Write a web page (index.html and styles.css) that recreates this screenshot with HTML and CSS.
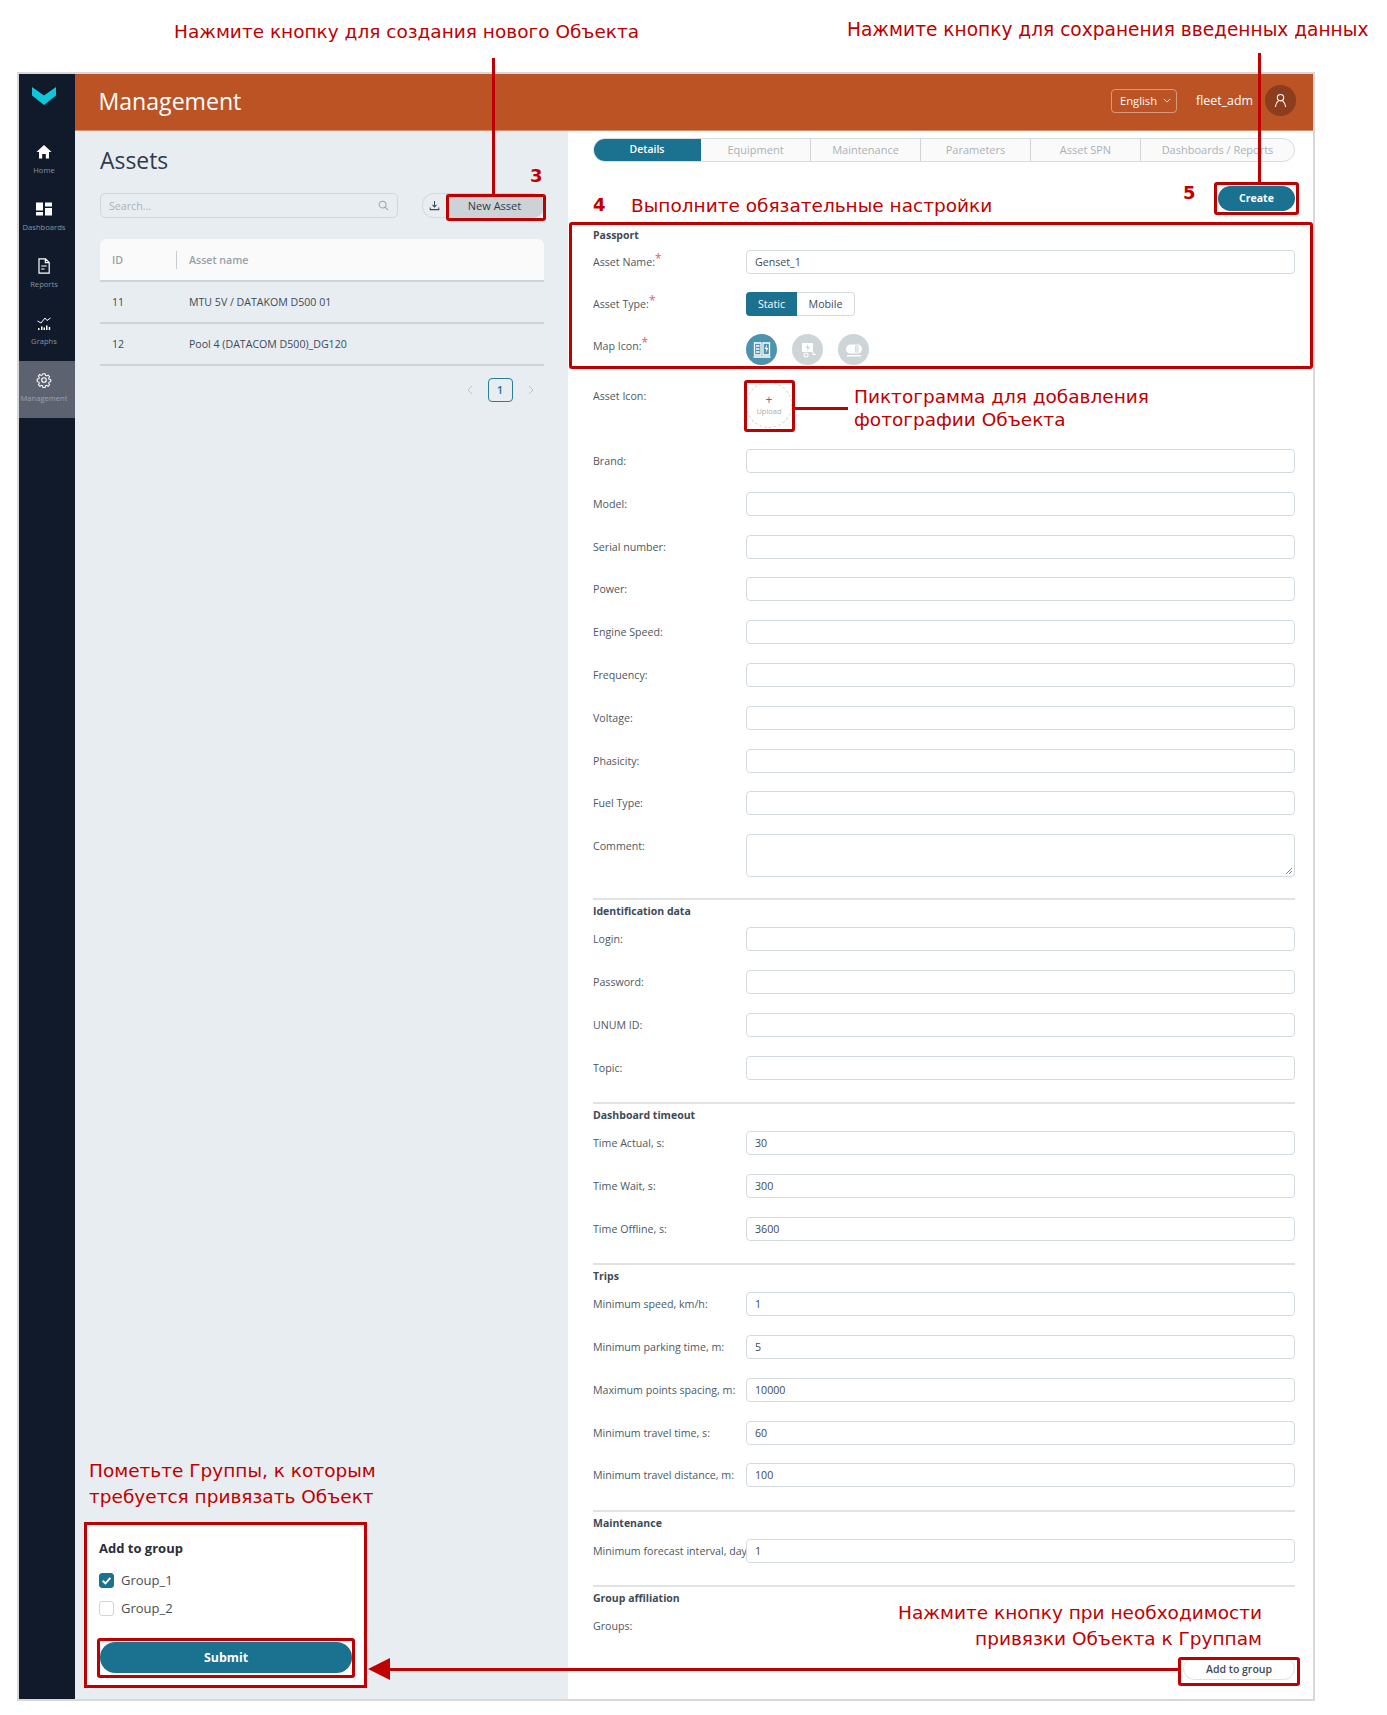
FILE: index.html
```html
<!DOCTYPE html>
<html lang="en">
<head>
<meta charset="utf-8">
<title>Management</title>
<link rel="stylesheet" href="styles.css">
</head>
<body>
<div class="app">
  <nav class="sidebar">
    <svg class="logo" viewBox="0 0 24 18"><path d="M0 0 L12 8.5 L24 0 L24 8.5 L12 18 L0 8.5 Z" fill="#10c6da"/></svg>
    <a class="nav-item nav-first">
      <svg class="nav-ico" viewBox="0 0 16 16"><path d="M8 1 L15.5 8 L13 8 L13 14.5 L9.8 14.5 L9.8 10 L6.2 10 L6.2 14.5 L3 14.5 L3 8 L.5 8 Z" fill="#fff"/></svg>
      <span>Home</span>
    </a>
    <a class="nav-item">
      <svg class="nav-ico" viewBox="0 0 16 16"><path d="M0 1.5h7v8H0zM9 1.5h7v4H9zM0 11h7v3.5H0zM9 7h7v7.5H9z" fill="#fff"/></svg>
      <span>Dashboards</span>
    </a>
    <a class="nav-item">
      <svg class="nav-ico" viewBox="0 0 16 16"><path d="M3 .8h6.5L13.2 4.5v10.7H3zM9.3 1v3.6h3.7M5.2 8h5.6M5.2 11h3.4" fill="none" stroke="#fff" stroke-width="1.2"/></svg>
      <span>Reports</span>
    </a>
    <a class="nav-item">
      <svg class="nav-ico" viewBox="0 0 16 16"><path d="M1.5 6 L5 8 L9 3 L11 5.5 L14.5 3" fill="none" stroke="#fff" stroke-width="1"/><path d="M2 13h1.5v2H2zM5 11.5h1.5V15H5zM7.5 12.5H9V15H7.5zM10 10.5h1.5V15H10zM12.7 12h1.5v3h-1.5z" fill="#fff"/></svg>
      <span>Graphs</span>
    </a>
    <a class="nav-item nav-active">
      <svg class="nav-ico" viewBox="0 0 16 16"><path d="M6.7 1h2.6l.4 2 1.3.6 1.8-1 1.8 1.9-1.1 1.7.5 1.3 2 .4v2.4l-2 .5-.5 1.3 1.1 1.7-1.8 1.9-1.8-1.1-1.3.6-.4 2H6.7l-.4-2-1.3-.6-1.8 1.1-1.8-1.9 1.1-1.7-.5-1.3-2-.5V7.2l2-.4.5-1.3-1.1-1.7L2.9 1.9l1.8 1 1.3-.6z" transform="translate(1.2 .9) scale(.85)" fill="none" stroke="#fff" stroke-width="1.2"/><circle cx="8" cy="8" r="2.3" fill="none" stroke="#fff" stroke-width="1.1"/></svg>
      <span>Management</span>
    </a>
  </nav>
  <div class="main">
    <header class="topbar">
      <h1 class="page-title">Management</h1>
      <div class="top-right">
        <div class="lang">English
          <svg class="lang-caret" viewBox="0 0 10 6"><path d="M1 1 L5 5 L9 1" fill="none" stroke="#fff" stroke-width="1"/></svg>
        </div>
        <span class="user">fleet_adm</span>
        <div class="avatar">
          <svg viewBox="0 0 16 16" class="avatar-ico"><circle cx="8" cy="5" r="3.4" fill="none" stroke="#fff" stroke-width="1.2"/><path d="M2.5 15 C3 10.5 5 9 5.8 8.2 M13.5 15 C13 10.5 11 9 10.2 8.2" fill="none" stroke="#fff" stroke-width="1.2"/></svg>
        </div>
      </div>
    </header>
    <div class="panels">
      <section class="left">
        <h2 class="assets-title">Assets</h2>
        <div class="toolbar">
          <div class="search">
            <span>Search...</span>
            <svg class="search-ico" viewBox="0 0 12 12"><circle cx="5" cy="5" r="3.7" fill="none" stroke="#9aa3ab" stroke-width="1.1"/><path d="M7.8 7.8 L11 11" stroke="#9aa3ab" stroke-width="1.1"/></svg>
          </div>
          <div class="btn-group">
            <div class="btn-down">
              <svg viewBox="0 0 12 12" class="down-ico"><path d="M6 1v6.5M3.8 5.4 L6 7.6 L8.2 5.4M1.3 8.3v2.2h9.4V8.3" fill="none" stroke="#3d4a57" stroke-width="1.1"/></svg>
            </div>
            <div class="btn-new">New Asset</div>
          </div>
        </div>
        <div class="table">
          <div class="t-head"><div class="c-id"><span>ID</span></div><div class="c-name">Asset name</div></div>
          <div class="t-row"><div class="c-id">11</div><div class="c-name">MTU 5V / DATAKOM D500 01</div></div>
          <div class="t-row"><div class="c-id">12</div><div class="c-name">Pool 4 (DATACOM D500)_DG120</div></div>
        </div>
        <div class="pager">
          <svg class="pg-arrow" viewBox="0 0 6 10"><path d="M5 1 L1 5 L5 9" fill="none" stroke="#b9c1c8" stroke-width="1"/></svg>
          <div class="pg-num">1</div>
          <svg class="pg-arrow" viewBox="0 0 6 10"><path d="M1 1 L5 5 L1 9" fill="none" stroke="#b9c1c8" stroke-width="1"/></svg>
        </div>
        <div class="group-card">
          <div class="group-title">Add to group</div>
          <label class="check-row"><span class="check checked"><svg viewBox="0 0 12 12"><path d="M2.5 6.2 L5 8.7 L9.6 3.6" fill="none" stroke="#fff" stroke-width="1.8"/></svg></span>Group_1</label>
          <label class="check-row"><span class="check"></span>Group_2</label>
          <div class="submit">Submit</div>
        </div>
      </section>
      <section class="right">
        <div class="tabs">
          <div class="tab tab-on">Details</div>
          <div class="tab">Equipment</div>
          <div class="tab">Maintenance</div>
          <div class="tab">Parameters</div>
          <div class="tab">Asset SPN</div>
          <div class="tab tab-last">Dashboards / Reports</div>
        </div>
        <div class="create-row"><div class="create">Create</div></div>
        <h3 class="sec-title sec-first">Passport</h3>
        <div class="row row-top"><label>Asset Name:<i>*</i></label><div class="field">Genset_1</div></div>
        <div class="row row-top"><label>Asset Type:<i>*</i></label>
          <div class="toggle"><span class="tg tg-on">Static</span><span class="tg">Mobile</span></div></div>
        <div class="row row-icons"><label>Map Icon:<i>*</i></label>
          <div class="map-icons">
            <span class="mi mi-on"><svg viewBox="0 0 20 20"><path d="M2.5 3h6.5v12H2.5zM11 3h6.5v12H11z" fill="none" stroke="#fff" stroke-width="1.3"/><path d="M4 6h3.5M4 9h3.5M4 12h3.5M1.5 17h17" stroke="#fff" stroke-width="1.4"/><path d="M15 4.5 L12.6 9 H14.4 L13.6 13 L16.4 8 H14.6 Z" fill="#fff"/></svg></span>
            <span class="mi"><svg viewBox="0 0 20 20"><path d="M4 3h11v9H4z" fill="#fff"/><path d="M10 4 L7.8 8 H9.6 L9 11 L12 7 H10.3 Z" fill="#cdd5d9"/><circle cx="8" cy="15" r="2" fill="none" stroke="#fff" stroke-width="1.2"/><path d="M15 12 V14.5 H18" fill="none" stroke="#fff" stroke-width="1.2"/></svg></span>
            <span class="mi"><svg viewBox="0 0 20 20"><rect x="2" y="4.5" width="16" height="9" rx="4.5" fill="#fff"/><path d="M11 5.5h3.4v7H11z" fill="#cdd5d9"/><path d="M11.6 7h2.2M11.6 9h2.2M11.6 11h2.2" stroke="#fff" stroke-width=".9"/><path d="M3 15.8h14" stroke="#fff" stroke-width="1.4"/></svg></span>
          </div></div>
        <div class="row row-upload"><label>Asset Icon:</label>
          <div class="upload"><span class="up-plus">+</span><span class="up-text">Upload</span></div></div>
        <div class="row"><label>Brand:</label><div class="field"></div></div>
        <div class="row"><label>Model:</label><div class="field"></div></div>
        <div class="row"><label>Serial number:</label><div class="field"></div></div>
        <div class="row"><label>Power:</label><div class="field"></div></div>
        <div class="row"><label>Engine Speed:</label><div class="field"></div></div>
        <div class="row"><label>Frequency:</label><div class="field"></div></div>
        <div class="row"><label>Voltage:</label><div class="field"></div></div>
        <div class="row"><label>Phasicity:</label><div class="field"></div></div>
        <div class="row"><label>Fuel Type:</label><div class="field"></div></div>
        <div class="row row-area"><label>Comment:</label><div class="field area">
          <svg class="grip" viewBox="0 0 8 8"><path d="M1 7 L7 1 M4 7 L7 4" stroke="#666" stroke-width=".8"/></svg></div></div>

        <div class="divider"></div>
        <h3 class="sec-title">Identification data</h3>
        <div class="row"><label>Login:</label><div class="field"></div></div>
        <div class="row"><label>Password:</label><div class="field"></div></div>
        <div class="row"><label>UNUM ID:</label><div class="field"></div></div>
        <div class="row"><label>Topic:</label><div class="field"></div></div>

        <div class="divider"></div>
        <h3 class="sec-title">Dashboard timeout</h3>
        <div class="row"><label>Time Actual, s:</label><div class="field">30</div></div>
        <div class="row"><label>Time Wait, s:</label><div class="field">300</div></div>
        <div class="row"><label>Time Offline, s:</label><div class="field">3600</div></div>

        <div class="divider"></div>
        <h3 class="sec-title">Trips</h3>
        <div class="row"><label>Minimum speed, km/h:</label><div class="field">1</div></div>
        <div class="row"><label>Minimum parking time, m:</label><div class="field">5</div></div>
        <div class="row"><label>Maximum points spacing, m:</label><div class="field">10000</div></div>
        <div class="row"><label>Minimum travel time, s:</label><div class="field">60</div></div>
        <div class="row"><label>Minimum travel distance, m:</label><div class="field">100</div></div>

        <div class="divider"></div>
        <h3 class="sec-title">Maintenance</h3>
        <div class="row"><label class="clip">Minimum forecast interval, days:</label><div class="field">1</div></div>

        <div class="divider"></div>
        <h3 class="sec-title">Group affiliation</h3>
        <div class="row row-groups"><label>Groups:</label></div>
        <div class="add-row"><div class="add-btn">Add to group</div></div>
      </section>
    </div>
  </div>
</div>

<div class="notes">
  <p class="note n-new">Нажмите кнопку для создания нового Объекта</p>
  <p class="note n-save">Нажмите кнопку для сохранения введенных данных</p>
  <p class="note n-req">Выполните обязательные настройки</p>
  <p class="note n-photo">Пиктограмма для добавления<br>фотографии Объекта</p>
  <p class="note n-mark">Пометьте Группы, к которым<br>требуется привязать Объект</p>
  <p class="note n-add">Нажмите кнопку при необходимости<br>привязки Объекта к Группам</p>
  <b class="num n3">3</b><b class="num n4">4</b><b class="num n5">5</b>
  <div class="box b-new"></div>
  <div class="box b-create"></div>
  <div class="box b-pass"></div>
  <div class="box b-upload"></div>
  <div class="box b-card"></div>
  <div class="box b-submit"></div>
  <div class="box b-add"></div>
  <div class="ln l-new"></div>
  <div class="ln l-save"></div>
  <div class="ln l-up"></div>
  <div class="ln l-arrow"></div>
  <div class="arrowhead"></div>
</div>
</body>
</html>
```
FILE: styles.css
```css
* { box-sizing: border-box; }
html, body { margin: 0; padding: 0; background: #fff; }
body { position: relative; width: 1387px; height: 1715px; overflow: hidden; font-family: "Open Sans", sans-serif; color: #3d4a57; }
.app { margin: 72px 0 0 17px; width: 1298px; height: 1629px; border: 2px solid #d8d8d8; display: flex; }

.sidebar { width: 56px; flex: none; background: #111a2b; display: flex; flex-direction: column; align-items: stretch; }
.logo { width: 24px; height: 18px; margin: 13px 0 0 13px; display: block; flex: none; }
.nav-item { height: 57px; flex: none; display: flex; flex-direction: column; align-items: center; padding: 11px 6px 0 0; color: #8794a3; font-size: 7.6px; line-height: 12px; white-space: nowrap; }
.nav-first { margin-top: 28px; }
.nav-ico { width: 16px; height: 16px; margin-bottom: 4px; flex: none; }
.nav-active { background: #5d6270; color: #9aa2ad; }

.main { flex: 1; display: flex; flex-direction: column; min-width: 0; }
.topbar { height: 57px; flex: none; background: #bc5325; display: flex; align-items: center; justify-content: space-between; padding: 0 17px 3px 23.5px; border-bottom: 1px solid #d98f6c; }
.page-title { margin: 0; font-weight: 400; font-size: 23.1px; color: #fff; }
.top-right { display: flex; align-items: center; }
.lang { width: 66px; height: 24px; border: 1px solid #d99a7c; border-radius: 4px; color: #fff; font-size: 11.2px; display: flex; align-items: center; padding-left: 8px; gap: 6px; }
.lang-caret { width: 8px; height: 5px; }
.user { color: #fff; font-size: 12.4px; margin-left: 19px; }
.avatar { width: 31px; height: 31px; border-radius: 50%; background: #8b3d1d; margin-left: 12px; display: flex; align-items: center; justify-content: center; }
.avatar-ico { width: 15px; height: 15px; }

.panels { flex: 1; display: flex; min-height: 0; }
.left { width: 493px; flex: none; background: #e8edf2; padding: 0 24.5px 12px 25px; display: flex; flex-direction: column; }
.assets-title { margin: 14px 0 0; font-size: 22.9px; font-weight: 400; line-height: 32px; color: #2f3a4a; }
.toolbar { display: flex; align-items: center; margin-top: 16px; justify-content: space-between; }
.search { width: 298px; height: 25px; border: 1px solid #cfd6dc; border-radius: 5px; background: #e8edf2; display: flex; align-items: center; justify-content: space-between; padding: 0 8px; font-size: 10.65px; color: #a9b2ba; }
.search-ico { width: 11px; height: 11px; }
.btn-group { display: flex; height: 25px; }
.btn-down { width: 24px; border: 1px solid #d3dae0; border-right: 0; border-radius: 12px 0 0 12px; display: flex; align-items: center; justify-content: center; }
.down-ico { width: 11px; height: 11px; }
.btn-new { width: 98px; background: #ccd2d6; border-radius: 0 12px 12px 0; font-size: 11px; display: flex; align-items: center; justify-content: center; color: #2f3a4a; }
.table { margin-top: 21px; font-size: 10.6px; }
.t-head { height: 43px; background: #fafafa; border-radius: 6px 6px 0 0; border-bottom: 2px solid #ccd3da; display: flex; align-items: center; color: #98a0a9; font-weight: 600; }
.t-row { height: 42px; border-bottom: 2px solid #ccd3da; display: flex; align-items: center; color: #3d4a57; }
.c-id { width: 89px; padding-left: 12px; flex: none; }
.t-head .c-id { height: 18px; border-right: 1px solid #c7cdd3; display: flex; align-items: center; width: 77px; margin-right: 12px; }
.pager { display: flex; align-items: center; justify-content: flex-end; margin-top: 12px; gap: 15px; padding-right: 10px; }
.pg-arrow { width: 6px; height: 10px; }
.pg-num { width: 25px; height: 24px; border: 1px solid #2b7e99; border-radius: 4px; font-size: 10.6px; display: flex; align-items: center; justify-content: center; color: #1a6f8f; font-weight: 600; }
.group-card { margin-top: auto; margin-left: -16px; width: 283px; height: 165px; background: #fff; padding: 16px 15px 0; display: flex; flex-direction: column; }
.group-title { font-size: 13px; font-weight: 700; color: #2a2f36; line-height: 20px; }
.check-row { display: flex; align-items: center; height: 28px; font-size: 13px; color: #4a4f55; gap: 7px; }
.group-title + .check-row { margin-top: 8px; }
.check { width: 15px; height: 15px; border: 1px solid #cfd4d8; border-radius: 3px; background: #fff; display: flex; }
.checked { background: #1a7190; border-color: #1a7190; }
.checked svg { width: 13px; height: 13px; }
.submit { margin: 20px 0 0 1px; width: 252px; height: 31px; border-radius: 16px; background: #1a7190; color: #fff; font-size: 12.4px; font-weight: 700; display: flex; align-items: center; justify-content: center; }

.right { flex: 1; background: #fff; padding: 6.5px 18px 0 25px; min-width: 0; }
.tabs { display: flex; height: 24px; border: 1px solid #d7dce0; border-radius: 12px; font-size: 11px; overflow: hidden; background: #fafafa; }
.tab { width: 110px; flex: none; display: flex; align-items: center; justify-content: center; color: #aab1b8; border-right: 1px solid #d0d5da; white-space: nowrap; padding-bottom: 1px; }
.tab-last { flex: 1; width: auto; border-right: 0; }
.tab-on { width: 108px; background: #1a7190; color: #fff; font-weight: 600; font-size: 10.5px; margin: -1px 0 -1px -1px; border-right: 0; }
.create-row { display: flex; justify-content: flex-end; margin-top: 24px; height: 25px; }
.create { width: 77px; height: 25px; background: #1a7190; border-radius: 13px; color: #fff; font-size: 10.5px; font-weight: 700; display: flex; align-items: center; justify-content: center; }
.sec-title { margin: 0; font-size: 10.5px; font-weight: 700; color: #3d4a57; line-height: 15px; }
.sec-first { margin-top: 17px; }
.row { display: flex; align-items: flex-start; height: 42.8px; }
.row-top { height: 42px; }
.sec-title + .row { margin-top: 8px; }
.sec-first + .row { margin-top: 7.5px; }
.row label { width: 153px; flex: none; font-size: 10.65px; color: #4d5863; line-height: 24px; white-space: nowrap; overflow: hidden; }
.row label i { color: #f0595f; font-style: normal; vertical-align: 3px; font-size: 12px; line-height: 1; }
.field { flex: 1; height: 24px; border: 1px solid #d3dae0; border-radius: 4px; font-size: 10.65px; padding: 0 8px; line-height: 22px; color: #3d4a57; background: #fff; position: relative; }
.area { height: 43px; }
.row-area { height: 64px; }
.grip { position: absolute; right: 1px; bottom: 1px; width: 8px; height: 8px; }
.toggle { display: flex; height: 24px; font-size: 10.65px; }
.tg { width: 58px; border: 1px solid #d3dae0; border-left: 0; border-radius: 0 4px 4px 0; display: flex; align-items: center; justify-content: center; }
.tg-on { width: 51px; background: #1a7190; border: 0; border-radius: 4px 0 0 4px; color: #fff; }
.row-icons { height: 48px; }
.map-icons { display: flex; gap: 15px; }
.mi { width: 31px; height: 31px; border-radius: 50%; background: #cdd5d9; display: flex; align-items: center; justify-content: center; }
.mi svg { width: 20px; height: 20px; }
.mi-on { background: #4c93ad; }
.row-upload { height: 67px; }
.row-upload label { padding-top: 2px; }
.upload { width: 46px; height: 46px; border: 1px dashed #d3d7db; border-radius: 50%; display: flex; flex-direction: column; align-items: center; justify-content: center; color: #6b7078; }
.up-plus { font-size: 12px; line-height: 13px; }
.up-text { font-size: 7.5px; line-height: 11px; color: #a9aeb3; }
.divider { height: 2px; background: #dfe3e6; margin-top: 3.7px; margin-bottom: 4px; }
.row-area + .divider { margin-top: 0; }
.row-groups { height: 26px; }
.add-row { display: flex; justify-content: flex-end; margin-top: 17px; }
.add-btn { width: 112px; height: 23px; border: 1px solid #dde2e6; border-radius: 12px; font-size: 10.5px; font-weight: 600; display: flex; align-items: center; justify-content: center; color: #3d4a57; }

.notes { position: absolute; left: 0; top: 0; width: 1387px; height: 1715px; pointer-events: none; }
.note { position: absolute; margin: 0; font-family: "DejaVu Sans", sans-serif; font-size: 18.5px; line-height: 23px; color: #c00000; white-space: nowrap; }
.n-new { left: 174px; top: 20px; }
.n-save { left: 847px; top: 18px; font-size: 18.58px; }
.n-req { left: 631px; top: 194px; }
.n-photo { left: 854px; top: 385px; }
.n-mark { left: 89px; top: 1458px; line-height: 26px; }
.n-add { right: 125px; top: 1600px; text-align: right; line-height: 26px; }
.num { position: absolute; font-family: "DejaVu Sans", sans-serif; font-weight: 700; font-size: 18px; line-height: 22px; color: #c00000; }
.n3 { left: 530px; top: 165px; }
.n4 { left: 593px; top: 194px; }
.n5 { left: 1183px; top: 182px; }
.box { position: absolute; border: 3px solid #c00000; border-radius: 3px; }
.b-new { left: 446px; top: 194px; width: 100px; height: 27px; }
.b-create { left: 1214px; top: 182px; width: 85px; height: 33px; }
.b-pass { left: 569px; top: 222px; width: 744px; height: 147px; }
.b-upload { left: 744px; top: 380px; width: 51px; height: 52px; }
.b-card { left: 84px; top: 1522px; width: 283px; height: 166px; border-radius: 0; }
.b-submit { left: 97px; top: 1638px; width: 258px; height: 40px; }
.b-add { left: 1178px; top: 1657px; width: 122px; height: 29px; }
.ln { position: absolute; background: #c00000; }
.l-new { left: 492px; top: 58px; width: 3px; height: 137px; }
.l-save { left: 1258px; top: 53px; width: 3px; height: 130px; }
.l-up { left: 795px; top: 407px; width: 53px; height: 3px; }
.l-arrow { left: 388px; top: 1668px; width: 790px; height: 3px; }
.arrowhead { position: absolute; left: 368px; top: 1658px; width: 0; height: 0; border-top: 11px solid transparent; border-bottom: 11px solid transparent; border-right: 22px solid #c00000; }
```
